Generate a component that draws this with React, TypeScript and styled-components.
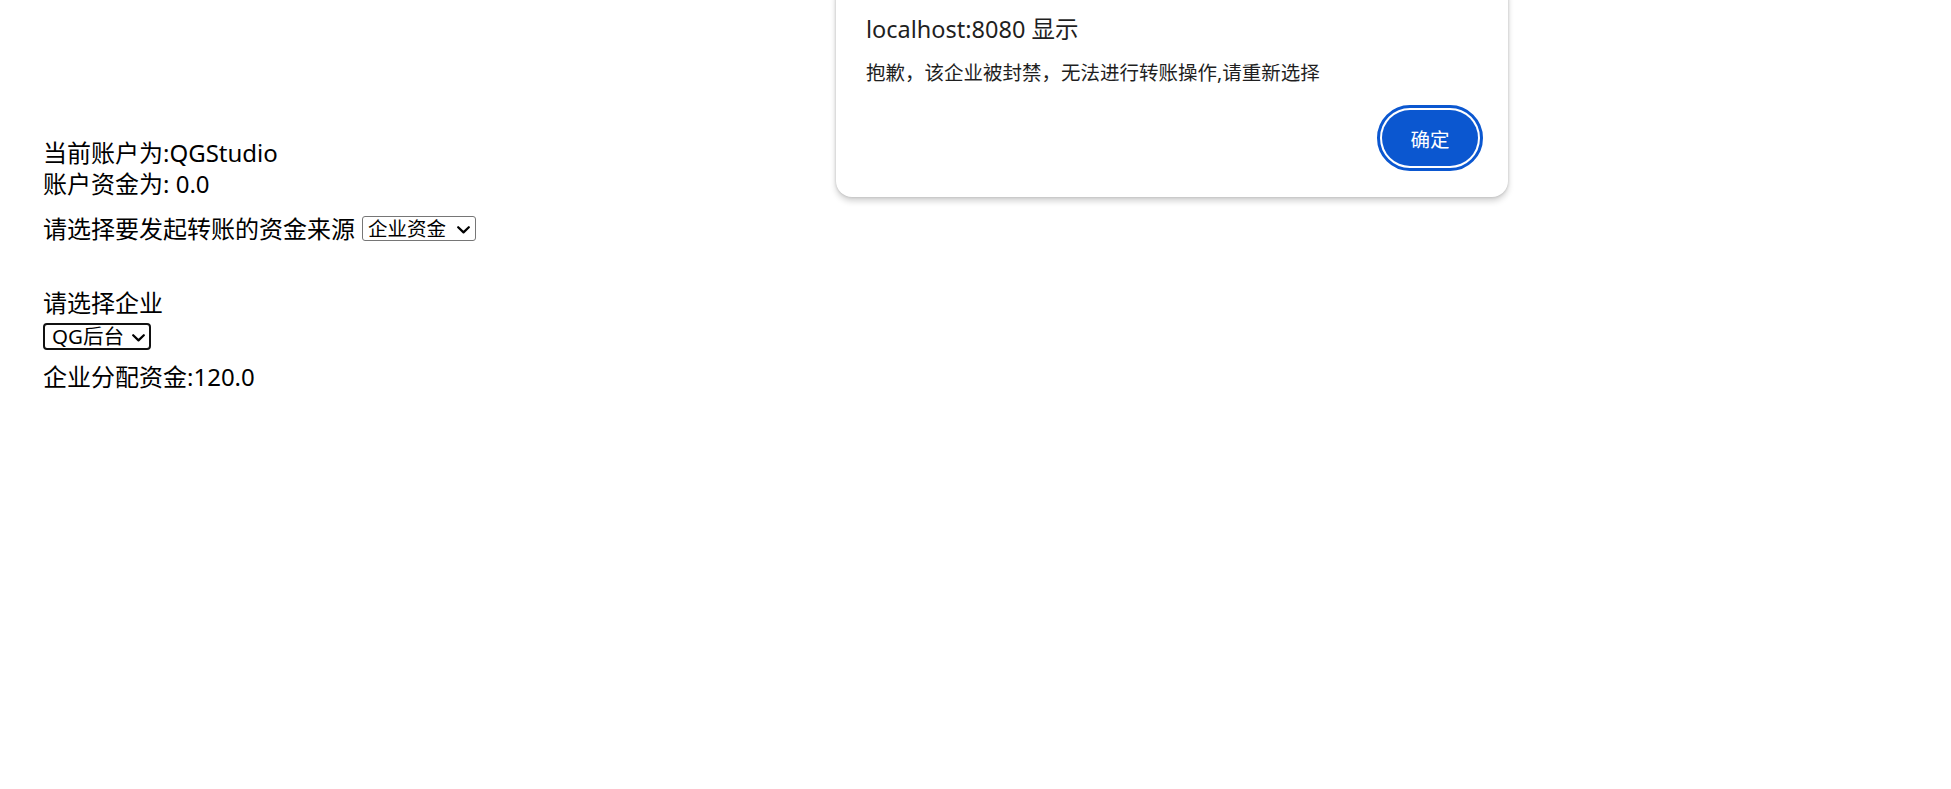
import React from "react";
import styled, { createGlobalStyle } from "styled-components";

const GlobalStyle = createGlobalStyle`
  html, body {
    margin: 0;
    padding: 0;
    background: #ffffff;
  }
  body {
    font-family: "Noto Sans", "Noto Sans CJK SC", sans-serif;
    color: #000000;
  }
`;

const Page = styled.div`
  position: relative;
  width: 1951px;
  height: 789px;
  overflow: hidden;
  box-sizing: border-box;
  padding: 137px 0 0 43px;
  font-size: 24px;
  line-height: 31px;
`;

const Line = styled.div<{ $mt?: number }>`
  margin-top: ${(p) => p.$mt ?? 0}px;
  white-space: nowrap;
`;

const SourceRow = styled.div`
  display: flex;
  align-items: center;
  gap: 7px;
  margin-top: 14px;
  white-space: nowrap;
`;

const SelectWrap = styled.div<{ $mt?: number; $ml?: number }>`
  position: relative;
  display: inline-flex;
  margin-top: ${(p) => p.$mt ?? 0}px;
  margin-left: ${(p) => p.$ml ?? 0}px;
`;

const Select = styled.select<{ $w: number; $focused?: boolean }>`
  appearance: none;
  -webkit-appearance: none;
  box-sizing: border-box;
  width: ${(p) => p.$w}px;
  height: ${(p) => (p.$focused ? 27 : 25)}px;
  margin: 0;
  padding: 0 0 0 ${(p) => (p.$focused ? 7 : 5)}px;
  font-family: "Noto Sans", "Noto Sans CJK SC", sans-serif;
  font-size: ${(p) => (p.$focused ? 20.5 : 19.5)}px;
  line-height: 1;
  color: #000;
  background: #fff;
  border: ${(p) => (p.$focused ? "2px solid #111111" : "1px solid #767676")};
  border-radius: ${(p) => (p.$focused ? 4 : 3)}px;
  outline: none;
`;

const Chevron = styled.svg<{ $right: number }>`
  position: absolute;
  right: ${(p) => p.$right}px;
  top: 50%;
  margin-top: -3px;
  width: 13px;
  height: 8px;
  pointer-events: none;
`;

const Dialog = styled.div`
  position: absolute;
  left: 836px;
  top: -20px;
  width: 672px;
  box-sizing: border-box;
  padding: 34px 30px 31px 30px;
  background: #ffffff;
  border-radius: 16px;
  box-shadow: 0 0 3px rgba(0, 0, 0, 0.18), 0 4px 6px rgba(0, 0, 0, 0.18);
  display: flex;
  flex-direction: column;
`;

const DialogTitle = styled.div`
  font-size: 23.5px;
  line-height: 30px;
  color: #1f1f1f;
  white-space: nowrap;
`;

const DialogMessage = styled.div`
  margin-top: 15.5px;
  font-size: 19.5px;
  line-height: 26px;
  color: #1f1f1f;
  white-space: nowrap;
`;

const ButtonRow = styled.div`
  display: flex;
  justify-content: flex-end;
  margin-top: 24.5px;
`;

const OkButton = styled.button`
  width: 96px;
  height: 56px;
  border: none;
  border-radius: 28px;
  background: #0b57d0;
  color: #ffffff;
  font-family: "Noto Sans", "Noto Sans CJK SC", sans-serif;
  font-size: 19.5px;
  outline: 3px solid #0b57d0;
  outline-offset: 2px;
  padding: 0;
  cursor: pointer;
`;

const ChevronIcon: React.FC<{ right: number }> = ({ right }) => (
  <Chevron $right={right} viewBox="0 0 13 8" fill="none">
    <path d="M1.2 1.2 L6.5 6.4 L11.8 1.2" stroke="#000" strokeWidth="2.2" strokeLinecap="round" strokeLinejoin="round" />
  </Chevron>
);

export default function App() {
  return (
    <>
      <GlobalStyle />
      <Page>
        <Line>当前账户为:QGStudio</Line>
        <Line>账户资金为: 0.0</Line>
        <SourceRow>
          <span>请选择要发起转账的资金来源</span>
          <SelectWrap>
            <Select $w={114} defaultValue="企业资金">
              <option>企业资金</option>
              <option>个人资金</option>
            </Select>
            <ChevronIcon right={6} />
          </SelectWrap>
        </SourceRow>
        <Line $mt={43}>请选择企业</Line>
        <SelectWrap $mt={5} $ml={0}>
          <Select $w={108} $focused defaultValue="QG后台">
            <option>QG后台</option>
          </Select>
          <ChevronIcon right={6} />
        </SelectWrap>
        <Line $mt={11}>企业分配资金:120.0</Line>
        <Dialog>
          <DialogTitle>localhost:8080 显示</DialogTitle>
          <DialogMessage>抱歉，该企业被封禁，无法进行转账操作,请重新选择</DialogMessage>
          <ButtonRow>
            <OkButton>确定</OkButton>
          </ButtonRow>
        </Dialog>
      </Page>
    </>
  );
}
